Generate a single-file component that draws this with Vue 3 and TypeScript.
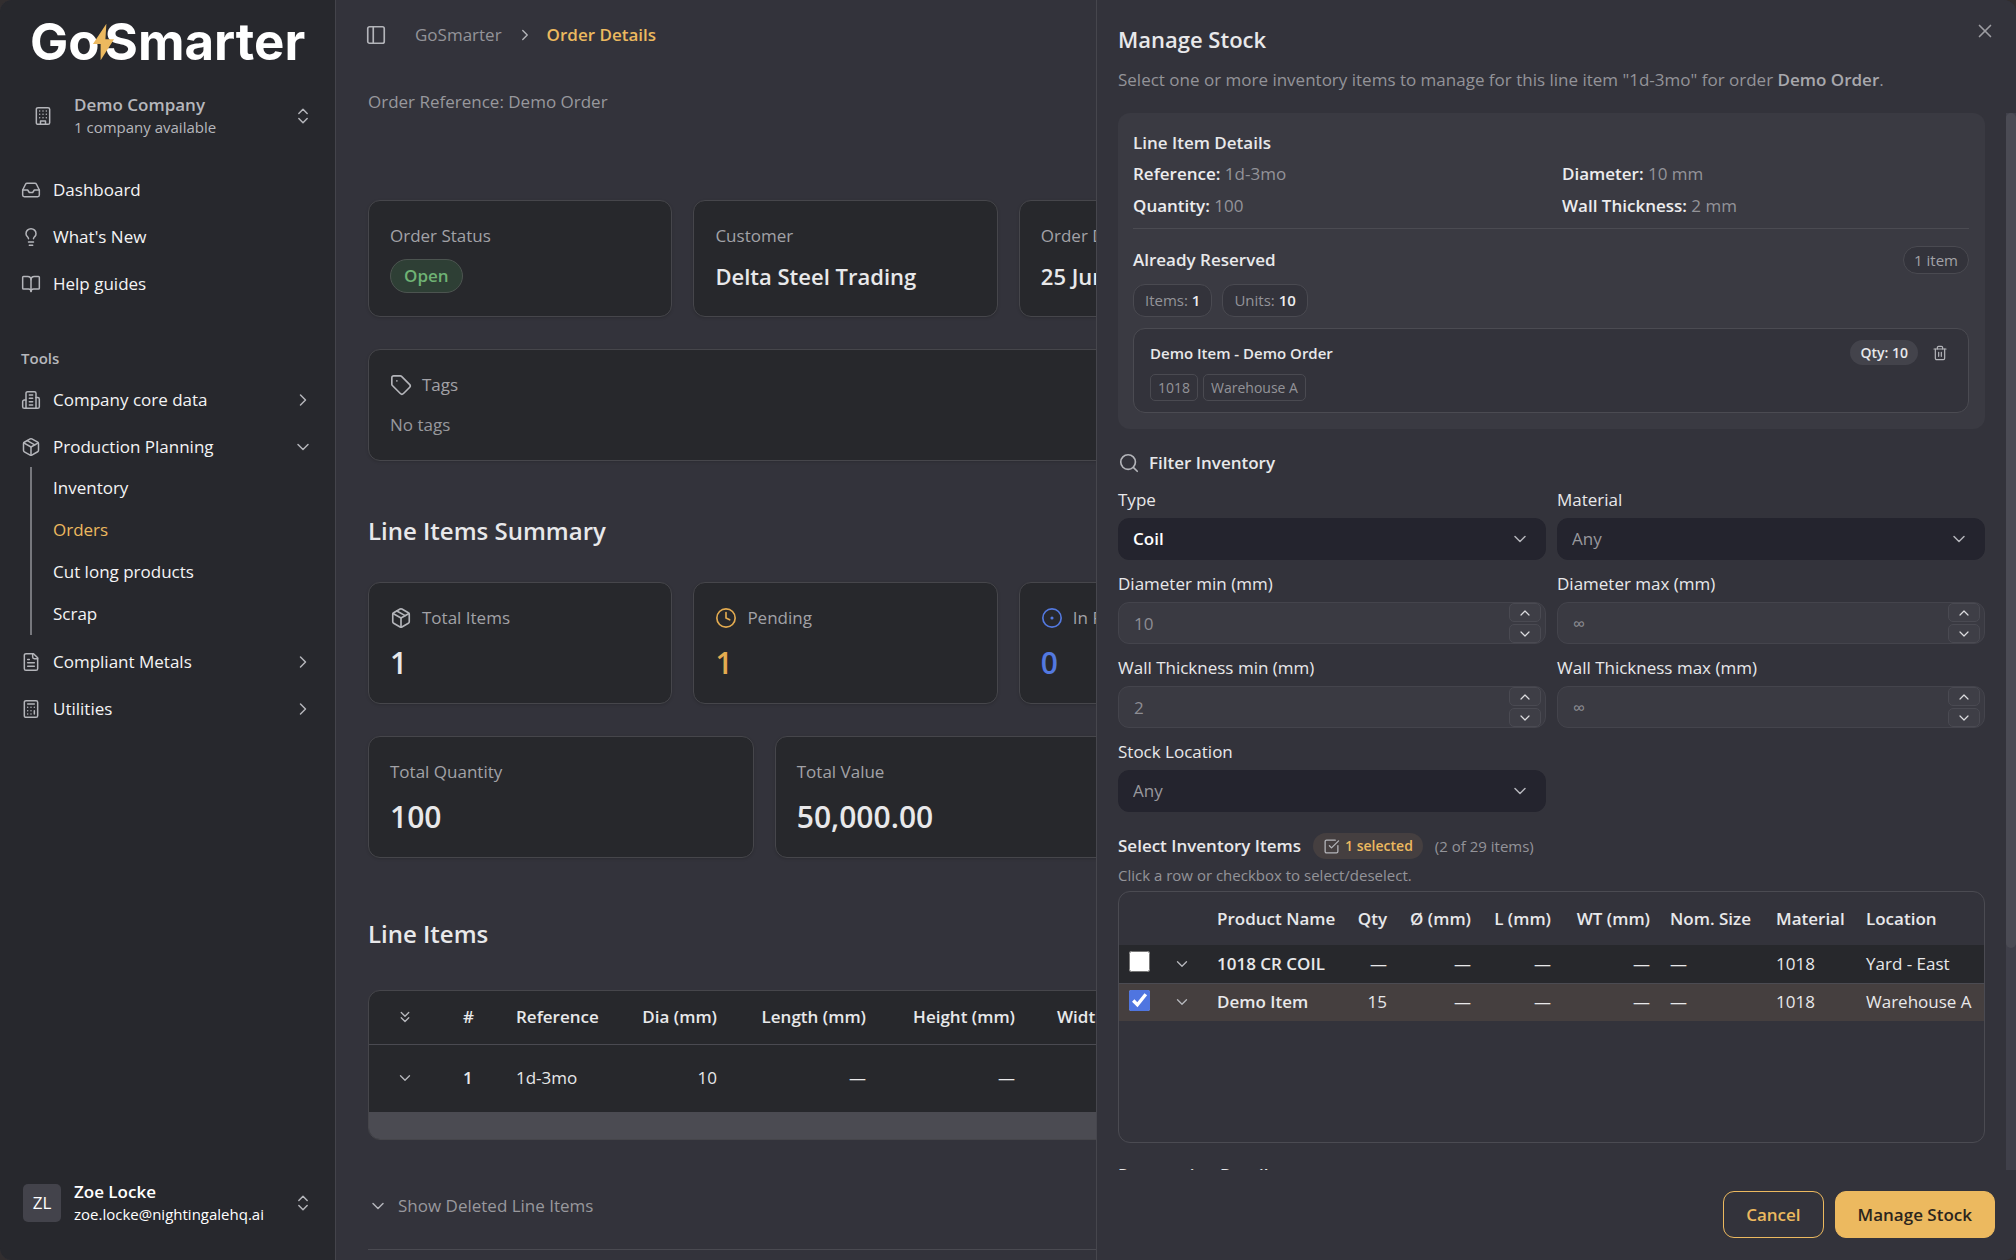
<script setup lang="ts">
import { ref, h, type FunctionalComponent } from 'vue'

const paths: Record<string, string[]> = {
  inbox: [
    'M22 12h-6l-2 3h-4l-2-3H2',
    'M5.45 5.11 2 12v6a2 2 0 0 0 2 2h16a2 2 0 0 0 2-2v-6l-3.45-6.89A2 2 0 0 0 16.76 4H7.24a2 2 0 0 0-1.79 1.11z',
  ],
  bulb: [
    'M15 14c.2-1 .7-1.7 1.5-2.5 1-.9 1.5-2.2 1.5-3.5A6 6 0 0 0 6 8c0 1 .2 2.2 1.5 3.5.7.7 1.3 1.5 1.5 2.5',
    'M9 18h6',
    'M10 22h4',
  ],
  book: [
    'M12 7v14',
    'M3 18a1 1 0 0 1-1-1V4a1 1 0 0 1 1-1h5a4 4 0 0 1 4 4 4 4 0 0 1 4-4h5a1 1 0 0 1 1 1v13a1 1 0 0 1-1 1h-6a3 3 0 0 0-3 3 3 3 0 0 0-3-3z',
  ],
  building: [
    'M6 2h12a2 2 0 0 1 2 2v16a2 2 0 0 1-2 2H6a2 2 0 0 1-2-2V4a2 2 0 0 1 2-2z',
    'M9 22v-4h6v4',
    'M8 6h.01M16 6h.01M12 6h.01M12 10h.01M12 14h.01M16 10h.01M16 14h.01M8 10h.01M8 14h.01',
  ],
  offices: [
    'M6 22V4a2 2 0 0 1 2-2h8a2 2 0 0 1 2 2v18Z',
    'M6 12H4a2 2 0 0 0-2 2v6a2 2 0 0 0 2 2h2',
    'M18 9h2a2 2 0 0 1 2 2v9a2 2 0 0 1-2 2h-2',
    'M10 6h4M10 10h4M10 14h4M10 18h4',
  ],
  box: [
    'M11 21.73a2 2 0 0 0 2 0l7-4A2 2 0 0 0 21 16V8a2 2 0 0 0-1-1.73l-7-4a2 2 0 0 0-2 0l-7 4A2 2 0 0 0 3 8v8a2 2 0 0 0 1 1.73z',
    'M12 22V12',
    'M3.3 7 12 12l8.7-5',
    'm7.5 4.27 9 5.15',
  ],
  file: [
    'M15 2H6a2 2 0 0 0-2 2v16a2 2 0 0 0 2 2h12a2 2 0 0 0 2-2V7Z',
    'M14 2v4a2 2 0 0 0 2 2h4',
    'M10 9H8M16 13H8M16 17H8',
  ],
  calc: [
    'M6 2h12a2 2 0 0 1 2 2v16a2 2 0 0 1-2 2H6a2 2 0 0 1-2-2V4a2 2 0 0 1 2-2z',
    'M8 6h8M16 14v4',
    'M16 10h.01M12 10h.01M8 10h.01M12 14h.01M8 14h.01M12 18h.01M8 18h.01',
  ],
  panel: ['M5 3h14a2 2 0 0 1 2 2v14a2 2 0 0 1-2 2H5a2 2 0 0 1-2-2V5a2 2 0 0 1 2-2z', 'M9 3v18'],
  tag: [
    'M12.586 2.586A2 2 0 0 0 11.172 2H4a2 2 0 0 0-2 2v7.172a2 2 0 0 0 .586 1.414l8.704 8.704a2.426 2.426 0 0 0 3.42 0l6.58-6.58a2.426 2.426 0 0 0 0-3.42z',
    'M7.5 7.5h.01',
  ],
  clock: ['M12 2a10 10 0 1 0 0 20 10 10 0 1 0 0-20z', 'M12 6v6l4 2'],
  dot: ['M12 2a10 10 0 1 0 0 20 10 10 0 1 0 0-20z', 'M12 11.2a.8.8 0 1 0 0 1.6.8.8 0 1 0 0-1.6z'],
  search: ['M11 3a8 8 0 1 0 0 16 8 8 0 1 0 0-16z', 'm21 21-4.3-4.3'],
  right: ['m9 18 6-6-6-6'],
  down: ['m6 9 6 6 6-6'],
  up: ['m18 15-6-6-6 6'],
  updown: ['m7 15 5 5 5-5', 'm7 9 5-5 5 5'],
  dbldown: ['m7 6 5 5 5-5', 'm7 13 5 5 5-5'],
  close: ['M18 6 6 18', 'm6 6 12 12'],
  check: ['M21 10.656V19a2 2 0 0 1-2 2H5a2 2 0 0 1-2-2V5a2 2 0 0 1 2-2h12.344', 'm9 11 3 3L22 4'],
  trash: [
    'M3 6h18',
    'M19 6v14a2 2 0 0 1-2 2H7a2 2 0 0 1-2-2V6',
    'M8 6V4a2 2 0 0 1 2-2h4a2 2 0 0 1 2 2v2',
    'M10 11v6M14 11v6',
  ],
}

const Icon: FunctionalComponent<{ name: string; size?: number }> = (props) =>
  h(
    'svg',
    {
      width: props.size ?? 20,
      height: props.size ?? 20,
      viewBox: '0 0 24 24',
      fill: 'none',
      stroke: 'currentColor',
      'stroke-width': 1.8,
      'stroke-linecap': 'round',
      'stroke-linejoin': 'round',
      'aria-hidden': 'true',
    },
    paths[props.name].map((d) => h('path', { d })),
  )
Icon.props = ['name', 'size']

const mainNav = [
  { icon: 'inbox', label: 'Dashboard' },
  { icon: 'bulb', label: "What's New" },
  { icon: 'book', label: 'Help guides' },
]

interface Tool {
  icon: string
  label: string
  children?: string[]
}
const tools: Tool[] = [
  { icon: 'offices', label: 'Company core data' },
  { icon: 'box', label: 'Production Planning', children: ['Inventory', 'Orders', 'Cut long products', 'Scrap'] },
  { icon: 'file', label: 'Compliant Metals' },
  { icon: 'calc', label: 'Utilities' },
]

const ranges = [
  { id: 'dia-min', label: 'Diameter min (mm)', hint: '10' },
  { id: 'dia-max', label: 'Diameter max (mm)', hint: '∞' },
  { id: 'wt-min', label: 'Wall Thickness min (mm)', hint: '2' },
  { id: 'wt-max', label: 'Wall Thickness max (mm)', hint: '∞' },
]
const values = ref<Record<string, number | undefined>>({})
const step = (id: string, by: number) => {
  values.value[id] = (values.value[id] || 0) + by
}

const stock = ref([
  { name: '1018 CR COIL', qty: '—', material: '1018', location: 'Yard - East', picked: false },
  { name: 'Demo Item', qty: '15', material: '1018', location: 'Warehouse A', picked: true },
])
</script>

<template>
  <div class="app">
    <aside class="sidebar">
      <div class="logo" aria-label="GoSmarter">
        <span>Go</span>
        <svg class="bolt" viewBox="0 0 24 38" aria-hidden="true"><path d="M15 0 1 21h8L9 38 23 16h-9z" /></svg>
        <span>Smarter</span>
      </div>

      <button class="switcher" type="button">
        <Icon name="building" />
        <span class="two"><b class="soft">Demo Company</b><small>1 company available</small></span>
        <Icon name="updown" />
      </button>

      <nav class="nav first">
        <a v-for="n in mainNav" :key="n.label" href="#" class="item"><Icon :name="n.icon" /><span>{{ n.label }}</span></a>
      </nav>

      <div class="group">Tools</div>
      <nav class="nav">
        <template v-for="t in tools" :key="t.label">
          <a href="#" class="item">
            <Icon :name="t.icon" /><span>{{ t.label }}</span>
            <Icon :name="t.children ? 'down' : 'right'" />
          </a>
          <div v-if="t.children" class="sub">
            <a v-for="c in t.children" :key="c" href="#" :class="{ active: c === 'Orders' }">{{ c }}</a>
          </div>
        </template>
      </nav>

      <button class="switcher user" type="button">
        <span class="avatar">ZL</span>
        <span class="two"><b>Zoe Locke</b><small>zoe.locke@nightingalehq.ai</small></span>
        <Icon name="updown" />
      </button>
    </aside>

    <main class="main">
      <header class="crumbs">
        <button class="icon-btn" type="button" aria-label="Toggle sidebar"><Icon name="panel" :size="22" /></button>
        <a href="#">GoSmarter</a>
        <Icon name="right" :size="18" />
        <b>Order Details</b>
      </header>

      <p class="order-ref">Order Reference: Demo Order</p>

      <div class="grid five">
        <section class="card">
          <div class="label">Order Status</div>
          <span class="status">Open</span>
        </section>
        <section class="card">
          <div class="label">Customer</div>
          <div class="value">Delta Steel Trading</div>
        </section>
        <section class="card">
          <div class="label">Order Date</div>
          <div class="value">25 June 2025</div>
        </section>
      </div>

      <section class="card tags">
        <div class="label"><Icon name="tag" :size="22" />Tags</div>
        <p>No tags</p>
      </section>

      <div class="section-head"><h2>Line Items Summary</h2></div>
      <div class="grid five">
        <section class="card stat">
          <div class="label"><Icon name="box" :size="22" />Total Items</div>
          <div class="number">1</div>
        </section>
        <section class="card stat pending">
          <div class="label"><Icon name="clock" :size="22" />Pending</div>
          <div class="number">1</div>
        </section>
        <section class="card stat progress">
          <div class="label"><Icon name="dot" :size="22" />In Progress</div>
          <div class="number">0</div>
        </section>
      </div>
      <div class="grid four">
        <section class="card stat">
          <div class="label">Total Quantity</div>
          <div class="number">100</div>
        </section>
        <section class="card stat">
          <div class="label">Total Value</div>
          <div class="number">50,000.00</div>
        </section>
      </div>

      <div class="section-head tall"><h2>Line Items</h2></div>
      <div class="lines">
        <table>
          <colgroup>
            <col class="c-open" /><col class="c-num" /><col class="c-ref" /><col class="c-dia" /><col class="c-len" /><col class="c-len" /><col />
          </colgroup>
          <thead>
            <tr>
              <th><button class="icon-btn" type="button" aria-label="Expand all"><Icon name="dbldown" :size="18" /></button></th>
              <th>#</th>
              <th>Reference</th>
              <th class="r">Dia (mm)</th>
              <th class="r">Length (mm)</th>
              <th class="r">Height (mm)</th>
              <th>Width (mm)</th>
            </tr>
          </thead>
          <tbody>
            <tr>
              <td><button class="icon-btn" type="button" aria-label="Expand row"><Icon name="down" :size="18" /></button></td>
              <td><b>1</b></td>
              <td>1d-3mo</td>
              <td class="r">10</td>
              <td class="r">—</td>
              <td class="r">—</td>
              <td></td>
            </tr>
          </tbody>
        </table>
        <div class="hbar"></div>
      </div>

      <button class="deleted" type="button"><Icon name="down" :size="20" />Show Deleted Line Items</button>
    </main>

    <div class="drawer" role="dialog" aria-labelledby="drawer-title">
      <header class="drawer-head">
        <h1 id="drawer-title">Manage Stock</h1>
        <p>Select one or more inventory items to manage for this line item "1d-3mo" for order <b>Demo Order</b>.</p>
        <button class="close" type="button" aria-label="Close"><Icon name="close" :size="22" /></button>
      </header>

      <div class="drawer-main">
        <div class="scroll">
          <section class="details">
            <h3>Line Item Details</h3>
            <div class="facts">
              <div><b>Reference:</b> 1d-3mo</div>
              <div><b>Diameter:</b> 10 mm</div>
              <div><b>Quantity:</b> 100</div>
              <div><b>Wall Thickness:</b> 2 mm</div>
            </div>
            <div class="reserved-head">
              <h3>Already Reserved</h3>
              <span class="count">1 item</span>
            </div>
            <div class="pills">
              <span>Items: <b>1</b></span>
              <span>Units: <b>10</b></span>
            </div>
            <div class="reserved">
              <div class="reserved-top">
                <b>Demo Item - Demo Order</b>
                <span class="qty">Qty: 10</span>
                <button class="icon-btn" type="button" aria-label="Remove"><Icon name="trash" :size="16" /></button>
              </div>
              <div class="chips"><span>1018</span><span>Warehouse A</span></div>
            </div>
          </section>

          <h3 class="filter-title"><Icon name="search" :size="22" />Filter Inventory</h3>
          <div class="filters">
            <div class="field">
              <label for="type">Type</label>
              <div class="control">
                <select id="type" class="set"><option>Coil</option></select>
                <Icon name="down" />
              </div>
            </div>
            <div class="field">
              <label for="material">Material</label>
              <div class="control">
                <select id="material"><option>Any</option></select>
                <Icon name="down" />
              </div>
            </div>
            <div v-for="r in ranges" :key="r.id" class="field">
              <label :for="r.id">{{ r.label }}</label>
              <div class="control">
                <input :id="r.id" v-model="values[r.id]" type="number" :placeholder="r.hint" />
                <div class="spin">
                  <button type="button" aria-label="Increase" @click="step(r.id, 1)"><Icon name="up" :size="16" /></button>
                  <button type="button" aria-label="Decrease" @click="step(r.id, -1)"><Icon name="down" :size="16" /></button>
                </div>
              </div>
            </div>
            <div class="field">
              <label for="location">Stock Location</label>
              <div class="control">
                <select id="location"><option>Any</option></select>
                <Icon name="down" />
              </div>
            </div>
          </div>

          <div class="pick-head">
            <h3>Select Inventory Items</h3>
            <span class="selected"><Icon name="check" :size="17" />1 selected</span>
            <span class="of">(2 of 29 items)</span>
          </div>
          <p class="help">Click a row or checkbox to select/deselect.</p>

          <div class="stock">
            <table>
              <colgroup>
                <col class="s-pick" /><col class="s-pick" /><col class="s-name" /><col class="s-qty" /><col class="s-dia" /><col class="s-len" /><col class="s-wt" /><col class="s-nom" /><col class="s-mat" /><col />
              </colgroup>
              <thead>
                <tr>
                  <th></th>
                  <th></th>
                  <th>Product Name</th>
                  <th class="r">Qty</th>
                  <th class="r">Ø (mm)</th>
                  <th class="r">L (mm)</th>
                  <th class="r">WT (mm)</th>
                  <th>Nom. Size</th>
                  <th>Material</th>
                  <th>Location</th>
                </tr>
              </thead>
              <tbody>
                <tr v-for="s in stock" :key="s.name" :class="{ picked: s.picked }">
                  <td><input v-model="s.picked" type="checkbox" :aria-label="s.name" /></td>
                  <td><button class="icon-btn" type="button" aria-label="Expand row"><Icon name="down" :size="18" /></button></td>
                  <td><b>{{ s.name }}</b></td>
                  <td class="r">{{ s.qty }}</td>
                  <td class="r">—</td>
                  <td class="r">—</td>
                  <td class="r">—</td>
                  <td>—</td>
                  <td>{{ s.material }}</td>
                  <td>{{ s.location }}</td>
                </tr>
              </tbody>
            </table>
          </div>

          <h3 class="next">Reservation Details</h3>
        </div>
        <div class="track"><div class="thumb"></div></div>
      </div>

      <footer class="drawer-foot">
        <button type="button" class="cancel">Cancel</button>
        <button type="button" class="primary">Manage Stock</button>
      </footer>
    </div>
  </div>
</template>

<style>
body {
  margin: 0;
  background: #322e2f;
}
</style>

<style scoped>
* {
  box-sizing: border-box;
}
.app {
  position: relative;
  display: flex;
  height: 100vh;
  overflow: hidden;
  border-radius: 12px;
  background: #33333b;
  color: #e8e8ea;
  font: 17px/24px 'Open Sans', 'Noto Sans', sans-serif;
}
button,
input,
select {
  font: inherit;
  color: inherit;
}
button {
  margin: 0;
  padding: 0;
  border: 0;
  background: none;
}
a {
  color: inherit;
  text-decoration: none;
}
b,
h1,
h2,
h3,
th {
  font-weight: 600;
}
h1,
h2,
h3,
p {
  margin: 0;
}
h3 {
  font-size: 17px;
  line-height: 24px;
}
svg {
  display: block;
  flex: none;
  color: #b4b5ba;
}
table {
  width: 100%;
  border-collapse: collapse;
  table-layout: fixed;
}
th {
  text-align: left;
}
td,
th {
  white-space: nowrap;
}
.r {
  text-align: right;
}
.icon-btn {
  display: grid;
  place-items: center;
}

/* Sidebar */
.sidebar {
  display: flex;
  flex: none;
  flex-direction: column;
  width: 336px;
  border-right: 1px solid #44444b;
  background: #27282d;
}
.logo {
  position: relative;
  display: flex;
  height: 85px;
  padding: 0 0 2px 30px;
  align-items: center;
  gap: 5px;
  color: #fff;
  font: 700 51px/60px Inter, sans-serif;
}
.bolt {
  position: absolute;
  top: 23px;
  left: 92px;
  width: 23px;
  height: 38px;
}
.bolt path {
  fill: #ecb95f;
}
.switcher {
  display: flex;
  align-items: center;
  height: 62px;
  padding: 0 22px 0 33px;
  text-align: left;
}
.two {
  display: flex;
  flex: 1;
  flex-direction: column;
  margin-left: 21px;
}
.two b,
.two small {
  line-height: 22px;
}
.two small {
  font-size: 15px;
}
.two .soft,
.two .soft + small {
  color: #b6b7bc;
}
.nav {
  display: flex;
  flex-direction: column;
  color: #f4f4f5;
}
.nav.first {
  margin-top: 19px;
}
.item {
  display: flex;
  align-items: center;
  height: 47px;
  padding: 0 22px 0 21px;
  gap: 12px;
}
.item span {
  flex: 1;
}
.group {
  margin: 39px 0 6px 21px;
  color: #b6b7bc;
  font-size: 15px;
  font-weight: 600;
}
.sub {
  display: flex;
  flex-direction: column;
  margin: -3px 0 3px 30px;
  padding-left: 21px;
  border-left: 2px solid #77787d;
}
.sub a {
  line-height: 42px;
}
.sub .active {
  color: #ecb95f;
}
.switcher.user {
  margin: auto 0 26px;
  padding-left: 23px;
  color: #fff;
}
.avatar {
  width: 38px;
  border-radius: 5px;
  background: #43434b;
  line-height: 38px;
  text-align: center;
}
.user .two {
  margin-left: 13px;
}

/* Page */
.main {
  flex: 1;
  min-width: 0;
  padding: 0 42px 0 32px;
}
.crumbs {
  display: flex;
  align-items: center;
  height: 70px;
  color: #939399;
}
.crumbs .icon-btn {
  margin-left: -3px;
}
.crumbs a {
  margin: 0 14px 0 28px;
}
.crumbs b {
  margin-left: 13px;
  color: #ecb95f;
}
.order-ref {
  margin: 20px 0 86px;
  color: #98989d;
}
.grid {
  display: grid;
  gap: 21px;
}
.grid + .grid,
.grid + .tags {
  margin-top: 32px;
}
.five {
  grid-template-columns: repeat(5, 1fr);
}
.four {
  grid-template-columns: repeat(4, 1fr);
}
.card {
  min-height: 117px;
  padding: 23px 21px 20px;
  border: 1px solid #46464b;
  border-radius: 12px;
  background: #27282c;
  box-shadow: 0 1px 3px rgba(0, 0, 0, 0.15);
}
.label {
  display: flex;
  align-items: center;
  gap: 10px;
  color: #a2a2a7;
}
.status {
  display: inline-block;
  margin-top: 11px;
  padding: 0 13px;
  border: 1px solid #4c5450;
  border-radius: 17px;
  background: #2e3f35;
  color: #6fb274;
  font-weight: 600;
  line-height: 32px;
}
.value {
  margin-top: 12px;
  font-size: 22px;
  font-weight: 600;
  line-height: 32px;
}
.card.tags {
  min-height: 112px;
}
.tags p {
  margin-top: 16px;
  color: #98989d;
}
.section-head {
  display: flex;
  align-items: center;
  min-height: 30px;
  margin: 55px 0 36px;
}
.section-head.tall {
  min-height: 41px;
}
h2 {
  font-size: 24px;
  line-height: 30px;
}
.card.stat {
  min-height: 122px;
}
.number {
  margin-top: 14px;
  font-size: 30px;
  font-weight: 600;
  line-height: 38px;
}
.pending svg,
.pending .number {
  color: #e3ab50;
}
.progress svg,
.progress .number {
  color: #5379e0;
}
.lines {
  overflow: hidden;
  border: 1px solid #46464b;
  border-radius: 12px;
  background: #27282c;
}
.lines th,
.lines td {
  padding: 0 21px;
}
.lines th {
  height: 53px;
  border-bottom: 1px solid #4a4a51;
}
.lines td {
  height: 68px;
}
.lines .icon-btn {
  margin-left: 6px;
}
.c-open {
  width: 73px;
}
.c-num {
  width: 53px;
}
.c-ref {
  width: 123px;
}
.c-dia {
  width: 120px;
}
.c-len {
  width: 149px;
}
.hbar {
  height: 27px;
  background: #4b4b52;
}
.deleted {
  display: flex;
  align-items: center;
  width: 100%;
  height: 110px;
  padding-top: 22px;
  border-bottom: 1px solid #4a4a51;
  color: #98989d;
  gap: 10px;
}

/* Drawer */
.drawer {
  position: absolute;
  top: 0;
  right: 0;
  bottom: 0;
  display: flex;
  flex-direction: column;
  width: 920px;
  max-width: 100%;
  border-left: 1px solid #46464d;
  background: #33333b;
}
.drawer-head {
  position: relative;
  display: flex;
  flex-direction: column;
  gap: 14px;
  padding: 24px 21px 21px;
}
h1 {
  font-size: 22px;
  line-height: 30px;
}
.drawer-head p {
  color: #939399;
}
.drawer-head p b {
  color: #a8a8ad;
}
.close {
  position: absolute;
  top: 20px;
  right: 20px;
}
.close svg {
  color: #9d9da2;
}
.drawer-main {
  display: flex;
  flex: 1;
  min-height: 0;
}
.scroll {
  flex: 1;
  min-width: 0;
  overflow: hidden;
  padding: 0 21px;
}
.track {
  width: 10px;
  background: #40404a;
}
.thumb {
  height: 79%;
  border-radius: 5px;
  background: #4b4b54;
}
.details {
  padding: 18px 16px 16px 15px;
  border-radius: 12px;
  background: #3a3a42;
}
.facts {
  display: grid;
  grid-template-columns: 1fr 1fr;
  margin-top: 7px;
  padding-bottom: 10px;
  border-bottom: 1px solid #4b4b52;
  color: #939399;
  row-gap: 8px;
}
.facts div:nth-child(even) {
  padding-left: 11px;
}
.facts b {
  color: #ececee;
}
.reserved-head {
  display: flex;
  align-items: center;
  justify-content: space-between;
  margin: 17px 0 10px;
}
.count {
  padding: 0 10px;
  border: 1px solid #4a4a51;
  border-radius: 14px;
  background: #33333b;
  color: #a2a2a7;
  font-size: 15px;
  line-height: 26px;
}
.pills {
  display: flex;
  gap: 10px;
}
.pills span {
  padding: 0 11px;
  border: 1px solid #4a4a51;
  border-radius: 12px;
  background: #33333b;
  color: #939399;
  font-size: 15px;
  line-height: 31px;
}
.pills b {
  color: #ececee;
}
.reserved {
  margin-top: 11px;
  padding: 11px 16px;
  border: 1px solid #4b4b52;
  border-radius: 12px;
  background: #33333b;
}
.reserved-top {
  display: flex;
  align-items: center;
  font-size: 15px;
}
.reserved-top > b {
  flex: 1;
}
.qty {
  padding: 0 10px;
  border-radius: 13px;
  background: #43434b;
  font-size: 14px;
  font-weight: 600;
  line-height: 25px;
}
.reserved .icon-btn {
  margin: 0 4px 0 14px;
}
.chips {
  display: flex;
  gap: 5px;
  margin-top: 9px;
}
.chips span {
  padding: 0 7px;
  border: 1px solid #4a4a51;
  border-radius: 5px;
  color: #939399;
  font-size: 14px;
  line-height: 25px;
}
.filter-title {
  display: flex;
  align-items: center;
  margin: 22px 0 13px;
  gap: 9px;
}
.filters {
  display: grid;
  grid-template-columns: 1fr 1fr;
  gap: 12px 11px;
}
.field label {
  display: block;
  margin-bottom: 6px;
}
.control {
  position: relative;
}
select,
.control input {
  display: block;
  width: 100%;
  height: 42px;
  margin: 0;
  padding: 0 15px;
  border: 1px solid #44444c;
  border-radius: 11px;
  outline: 0;
  appearance: none;
  background: #3a3a42;
}
select {
  padding: 0 14px;
  border-color: #24242e;
  background: #24242e;
  color: #98989d;
}
select.set {
  color: #fff;
  font-weight: 600;
}
.control input {
  appearance: textfield;
}
.control input::-webkit-inner-spin-button {
  appearance: none;
}
.control input::placeholder {
  color: #8d8d93;
}
.control > svg {
  position: absolute;
  top: 11px;
  right: 16px;
}
.spin {
  position: absolute;
  top: 1px;
  right: 5px;
  display: flex;
  flex-direction: column;
  gap: 2px;
}
.spin button {
  display: grid;
  width: 32px;
  height: 19px;
  place-items: center;
  border: 1px solid #4a4a52;
  border-radius: 5px;
  background: #3e3e46;
}
.spin svg {
  color: #dcdcdf;
}
.pick-head {
  display: flex;
  align-items: center;
  margin-top: 21px;
  gap: 12px;
}
.selected {
  display: flex;
  align-items: center;
  height: 26px;
  padding: 0 10px;
  border-radius: 13px;
  background: #453f40;
  color: #ecb95f;
  font-size: 14px;
  font-weight: 600;
  gap: 5px;
}
.of,
.help {
  color: #939399;
  font-size: 15px;
}
.help {
  margin: 6px 0;
  line-height: 20px;
}
.stock {
  height: 252px;
  overflow: hidden;
  border: 1px solid #4b4b52;
  border-radius: 12px;
}
.stock th,
.stock td {
  padding: 0 10px;
}
.stock th {
  height: 53px;
}
.stock td {
  height: 38px;
}
.stock tbody tr {
  background: #27282c;
}
.stock tbody tr.picked {
  border-top: 1px solid #4b4b52;
  background: #453f3f;
}
.stock input {
  display: block;
  width: 21px;
  height: 21px;
  margin: 0 0 4px;
  accent-color: #4f75e0;
}
.s-pick {
  width: 44px;
}
.s-name {
  width: 139px;
}
.s-qty {
  width: 51px;
}
.s-dia {
  width: 84px;
}
.s-len {
  width: 80px;
}
.s-wt {
  width: 99px;
}
.s-nom {
  width: 106px;
}
.s-mat {
  width: 90px;
}
.next {
  margin-top: 20px;
}
.drawer-foot {
  display: flex;
  justify-content: flex-end;
  padding: 21px 21px 22px;
  gap: 11px;
}
.drawer-foot button {
  height: 47px;
  padding: 0 22px;
  border: 1px solid #ecb95f;
  border-radius: 11px;
  font-weight: 600;
}
.cancel {
  color: #ecb95f;
}
.primary {
  background: #ecb95f;
  color: #2b251d;
}
</style>
